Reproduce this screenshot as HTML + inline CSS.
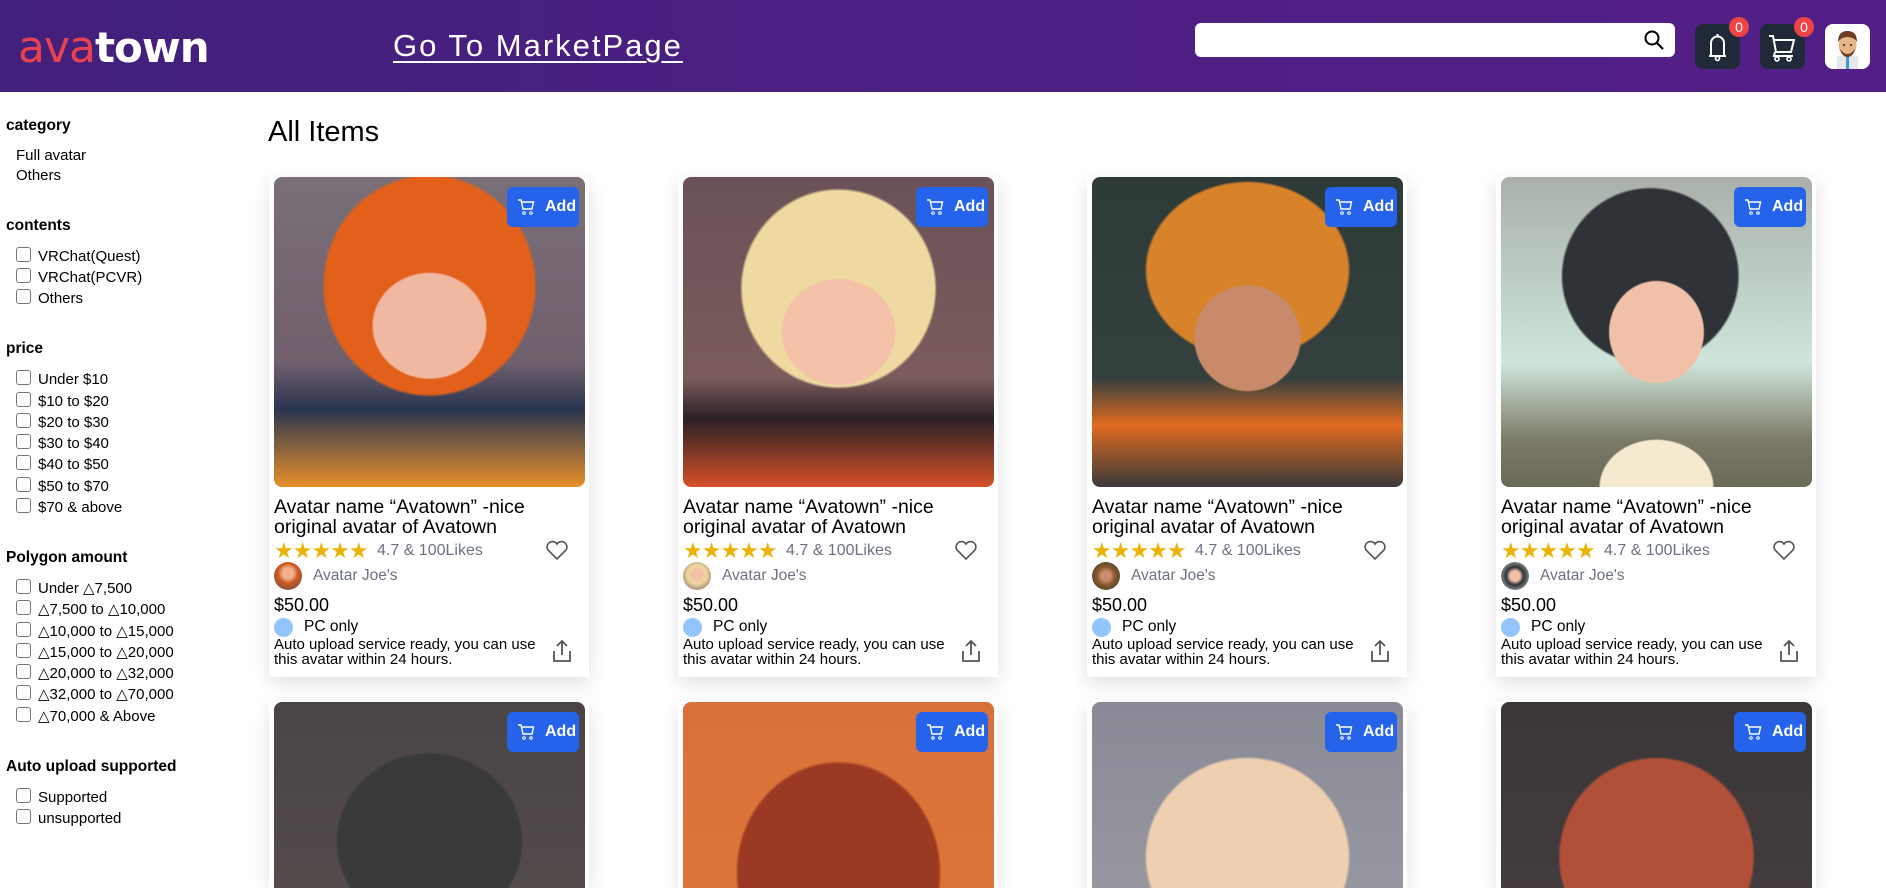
<!DOCTYPE html>
<html style="height:888px;overflow:hidden"><head><meta charset="utf-8">
<style>
*{margin:0;padding:0;box-sizing:border-box}
html,body{width:1886px;height:888px;overflow:hidden}
body{background:#fff;font-family:"Liberation Sans",sans-serif;color:#000;position:relative}
.hdr{position:absolute;left:0;top:0;width:1886px;height:92px;background:linear-gradient(90deg,#43207c,#4b1f82 50%,#531f86)}
.logo{position:absolute;left:18px;top:22px;font-size:42px;font-weight:bold;letter-spacing:-1px}
.logo .a{color:#e8414f;font-family:"DejaVu Sans",sans-serif;font-weight:normal;font-size:44px}
.logo .t{color:#fff;font-family:"DejaVu Sans",sans-serif}
.mk{position:absolute;left:393px;top:28px;color:#fff;font-size:31px;text-decoration:underline;letter-spacing:2px;text-underline-offset:5px;text-decoration-thickness:2px}
.search{position:absolute;left:1195px;top:23px;width:480px;height:34px;background:#fff;border-radius:6px}
.ib{position:absolute;top:24px;width:45px;height:45px;background:#1f2937;border-radius:8px}
.badge{position:absolute;top:-7px;right:-9px;width:20px;height:20px;border-radius:50%;background:#ef4444;color:#fff;font-size:14px;text-align:center;line-height:20px}
.av{position:absolute;left:1825px;top:24px;width:45px;height:45px;background:#fff;border-radius:8px;overflow:hidden}
.s{position:absolute;left:6px;font-size:15.5px;font-weight:bold}
.i{position:absolute;left:16px;font-size:15px;white-space:nowrap}
.c{position:absolute;left:16px;font-size:15px;white-space:nowrap}
.c:before{content:"";display:inline-block;width:13px;height:13px;border:1px solid #767676;border-radius:3px;margin-right:7px;vertical-align:-1px}
h1{position:absolute;left:268px;top:116px;font-size:29px;font-weight:normal}
.card{position:absolute;width:320px;height:500px;background:#fff;box-shadow:0 6px 18px rgba(0,0,0,.12)}
.img{position:absolute;left:5px;top:0;width:311px;height:310px;border-radius:8px;overflow:hidden}
.add{position:absolute;right:10px;top:10px;width:72px;height:40px;background:#2563eb;border-radius:6px;color:#fff;font-weight:bold;font-size:16px;line-height:40px;padding-left:38px}
.add svg{position:absolute;left:10px;top:11px}
.ti{position:absolute;left:5px;top:320px;font-size:19.5px;line-height:20px;width:310px}
.st{position:absolute;left:5px;top:361px;color:#eab308;font-size:22px;letter-spacing:-1px}
.rt{position:absolute;left:108px;top:365px;color:#6b7280;font-size:16px}
.hr{position:absolute;left:276px;top:362px}
.sl{position:absolute;left:5px;top:385px;width:28px;height:28px;border-radius:50%}
.sn{position:absolute;left:44px;top:390px;color:#6b7280;font-size:15.5px}
.pr{position:absolute;left:5px;top:418px;font-size:18px}
.dot{position:absolute;left:5px;top:441px;width:19px;height:19px;border-radius:50%;background:#93c5fd}
.pc{position:absolute;left:35px;top:441px;font-size:15.5px}
.au{position:absolute;left:5px;top:460px;font-size:15px;line-height:15px;width:280px}
.sh{position:absolute;left:283px;top:462px}
</style></head><body>
<div class="hdr">
<div class="logo"><span class="a">ava</span><span class="t">town</span></div>
<div class="mk">Go To MarketPage</div>
<div class="search"><svg style="position:absolute;right:10px;top:6px" width="22" height="22" viewBox="0 0 22 22"><circle cx="9" cy="9" r="6.5" fill="none" stroke="#000" stroke-width="2"/><path d="M14 14l6 6" stroke="#000" stroke-width="2.2"/></svg></div>
<div class="ib" style="left:1695px"><svg width="45" height="45" viewBox="0 0 45 45"><path d="M14 32h17M16 32V19a6.5 6.5 0 0 1 13 0v13" fill="none" stroke="#fff" stroke-width="2"/><path d="M22.5 10v2" stroke="#fff" stroke-width="2"/><circle cx="22.5" cy="34.5" r="2" fill="none" stroke="#fff" stroke-width="1.6"/></svg><div class="badge">0</div></div>
<div class="ib" style="left:1760px"><svg width="45" height="45" viewBox="0 0 45 45"><path d="M9 12h4l3 16h15l3-12H14" fill="none" stroke="#fff" stroke-width="2"/><path d="M15 28l-1 4h19" fill="none" stroke="#fff" stroke-width="2"/><circle cx="17" cy="35" r="2" fill="none" stroke="#fff" stroke-width="1.6"/><circle cx="29" cy="35" r="2" fill="none" stroke="#fff" stroke-width="1.6"/></svg><div class="badge">0</div></div>
<div class="av"><svg width="45" height="45" viewBox="0 0 45 45"><rect x="12" y="32" width="21" height="13" fill="#e5e7eb"/><rect x="21" y="33" width="3" height="12" fill="#3b9ad9"/><ellipse cx="22.5" cy="21" rx="9" ry="11" fill="#e8b48a"/><path d="M13 18q0-11 9.5-11t9.5 11q-3-5-9.5-5t-9.5 5z" fill="#6b3f22"/><path d="M15 25q7.5 10 15 0q-2 8-7.5 8t-7.5-8z" fill="#6b3f22"/><circle cx="19" cy="21" r="1" fill="#222"/><circle cx="26" cy="21" r="1" fill="#222"/></svg></div>
</div>

<div class="s" style="top:117px">category</div>
<div class="i" style="top:147px">Full avatar</div>
<div class="i" style="top:167px">Others</div>
<div class="s" style="top:217px">contents</div>
<div class="c" style="top:247px">VRChat(Quest)</div>
<div class="c" style="top:268px">VRChat(PCVR)</div>
<div class="c" style="top:289px">Others</div>
<div class="s" style="top:340px">price</div>
<div class="c" style="top:370px">Under $10</div>
<div class="c" style="top:392px">$10 to $20</div>
<div class="c" style="top:413px">$20 to $30</div>
<div class="c" style="top:434px">$30 to $40</div>
<div class="c" style="top:455px">$40 to $50</div>
<div class="c" style="top:477px">$50 to $70</div>
<div class="c" style="top:498px">$70 &amp; above</div>
<div class="s" style="top:549px">Polygon amount</div>
<div class="c" style="top:579px">Under △7,500</div>
<div class="c" style="top:600px">△7,500 to △10,000</div>
<div class="c" style="top:622px">△10,000 to △15,000</div>
<div class="c" style="top:643px">△15,000 to △20,000</div>
<div class="c" style="top:664px">△20,000 to △32,000</div>
<div class="c" style="top:685px">△32,000 to △70,000</div>
<div class="c" style="top:707px">△70,000 &amp; Above</div>
<div class="s" style="top:758px">Auto upload supported</div>
<div class="c" style="top:788px">Supported</div>
<div class="c" style="top:809px">unsupported</div>

<h1>All Items</h1>

<div class="card" style="left:269px;top:177px"><div class="img" style="background:radial-gradient(ellipse 30% 28% at 50% 48%,#f0b8a0 60%,transparent 62%),radial-gradient(ellipse 48% 50% at 50% 35%,#e2601a 70%,transparent 72%),linear-gradient(180deg,#7a6f78 0%,#6f5f6c 60%,#2a3550 75%,#e8902a 100%)"></div><div class="add"><svg width="18" height="18" viewBox="0 0 18 18"><path d="M1 2h3l2 9h9l1.5-7H5" fill="none" stroke="#fff" stroke-width="1.4"/><circle cx="7" cy="15" r="1.3" fill="none" stroke="#fff"/><circle cx="14" cy="15" r="1.3" fill="none" stroke="#fff"/></svg>Add</div>
<div class="ti">Avatar name “Avatown” -nice original avatar of Avatown</div><div class="st">★★★★★</div><div class="rt">4.7 &amp; 100Likes</div><svg class="hr" width="24" height="22" viewBox="0 0 24 22"><path d="M12 20L3 11a5 5 0 0 1 9-6 5 5 0 0 1 9 6z" fill="none" stroke="#555" stroke-width="1.6"/></svg><div class="sl" style="background:radial-gradient(circle at 50% 40%,#f0b090 25%,#d05a20 45%,#5a4a5a)"></div><div class="sn">Avatar Joe's</div><div class="pr">$50.00</div><div class="dot"></div><div class="pc">PC only</div><div class="au">Auto upload service ready, you can use this avatar within 24 hours.</div><svg class="sh" width="20" height="24" viewBox="0 0 20 24"><path d="M10 2v14M5 7l5-5 5 5M2 12v10h16V12" fill="none" stroke="#555" stroke-width="1.8"/></svg></div>

<div class="card" style="left:678px;top:177px"><div class="img" style="background:radial-gradient(ellipse 30% 28% at 50% 50%,#f3c2a8 60%,transparent 62%),radial-gradient(ellipse 44% 45% at 50% 36%,#eed9a0 70%,transparent 72%),linear-gradient(180deg,#6a5258 0%,#7a5c5c 65%,#2a2024 78%,#d8502a 100%)"></div><div class="add"><svg width="18" height="18" viewBox="0 0 18 18"><path d="M1 2h3l2 9h9l1.5-7H5" fill="none" stroke="#fff" stroke-width="1.4"/><circle cx="7" cy="15" r="1.3" fill="none" stroke="#fff"/><circle cx="14" cy="15" r="1.3" fill="none" stroke="#fff"/></svg>Add</div>
<div class="ti">Avatar name “Avatown” -nice original avatar of Avatown</div><div class="st">★★★★★</div><div class="rt">4.7 &amp; 100Likes</div><svg class="hr" width="24" height="22" viewBox="0 0 24 22"><path d="M12 20L3 11a5 5 0 0 1 9-6 5 5 0 0 1 9 6z" fill="none" stroke="#555" stroke-width="1.6"/></svg><div class="sl" style="background:radial-gradient(circle at 50% 45%,#f3c2a8 25%,#eed9a0 45%,#6a5258)"></div><div class="sn">Avatar Joe's</div><div class="pr">$50.00</div><div class="dot"></div><div class="pc">PC only</div><div class="au">Auto upload service ready, you can use this avatar within 24 hours.</div><svg class="sh" width="20" height="24" viewBox="0 0 20 24"><path d="M10 2v14M5 7l5-5 5 5M2 12v10h16V12" fill="none" stroke="#555" stroke-width="1.8"/></svg></div>

<div class="card" style="left:1087px;top:177px"><div class="img" style="background:radial-gradient(ellipse 28% 28% at 50% 52%,#c88a6a 60%,transparent 62%),radial-gradient(ellipse 46% 40% at 50% 30%,#d8822a 70%,transparent 72%),linear-gradient(180deg,#2e3a38 0%,#34403e 65%,#e06a20 80%,#3a3a3a 100%)"></div><div class="add"><svg width="18" height="18" viewBox="0 0 18 18"><path d="M1 2h3l2 9h9l1.5-7H5" fill="none" stroke="#fff" stroke-width="1.4"/><circle cx="7" cy="15" r="1.3" fill="none" stroke="#fff"/><circle cx="14" cy="15" r="1.3" fill="none" stroke="#fff"/></svg>Add</div>
<div class="ti">Avatar name “Avatown” -nice original avatar of Avatown</div><div class="st">★★★★★</div><div class="rt">4.7 &amp; 100Likes</div><svg class="hr" width="24" height="22" viewBox="0 0 24 22"><path d="M12 20L3 11a5 5 0 0 1 9-6 5 5 0 0 1 9 6z" fill="none" stroke="#555" stroke-width="1.6"/></svg><div class="sl" style="background:radial-gradient(circle at 50% 50%,#c88a6a 25%,#8a5a2a 45%,#2e3a38)"></div><div class="sn">Avatar Joe's</div><div class="pr">$50.00</div><div class="dot"></div><div class="pc">PC only</div><div class="au">Auto upload service ready, you can use this avatar within 24 hours.</div><svg class="sh" width="20" height="24" viewBox="0 0 20 24"><path d="M10 2v14M5 7l5-5 5 5M2 12v10h16V12" fill="none" stroke="#555" stroke-width="1.8"/></svg></div>

<div class="card" style="left:1496px;top:177px"><div class="img" style="background:radial-gradient(ellipse 25% 27% at 50% 50%,#f0c0a8 60%,transparent 62%),radial-gradient(ellipse 40% 40% at 48% 32%,#2f3338 70%,transparent 72%),radial-gradient(ellipse 30% 25% at 50% 100%,#f3ead0 60%,transparent 62%),linear-gradient(180deg,#a9b0aa 0%,#cfe6da 60%,#7a7a66 85%,#6a6a58 100%)"></div><div class="add"><svg width="18" height="18" viewBox="0 0 18 18"><path d="M1 2h3l2 9h9l1.5-7H5" fill="none" stroke="#fff" stroke-width="1.4"/><circle cx="7" cy="15" r="1.3" fill="none" stroke="#fff"/><circle cx="14" cy="15" r="1.3" fill="none" stroke="#fff"/></svg>Add</div>
<div class="ti">Avatar name “Avatown” -nice original avatar of Avatown</div><div class="st">★★★★★</div><div class="rt">4.7 &amp; 100Likes</div><svg class="hr" width="24" height="22" viewBox="0 0 24 22"><path d="M12 20L3 11a5 5 0 0 1 9-6 5 5 0 0 1 9 6z" fill="none" stroke="#555" stroke-width="1.6"/></svg><div class="sl" style="background:radial-gradient(circle at 50% 50%,#f0c0a8 25%,#2f3338 45%,#cfe6da)"></div><div class="sn">Avatar Joe's</div><div class="pr">$50.00</div><div class="dot"></div><div class="pc">PC only</div><div class="au">Auto upload service ready, you can use this avatar within 24 hours.</div><svg class="sh" width="20" height="24" viewBox="0 0 20 24"><path d="M10 2v14M5 7l5-5 5 5M2 12v10h16V12" fill="none" stroke="#555" stroke-width="1.8"/></svg></div>

<div class="card" style="left:269px;top:702px;height:186px"><div class="img" style="background:radial-gradient(ellipse 26% 28% at 50% 82%,#d8a888 60%,transparent 62%),radial-gradient(ellipse 42% 40% at 50% 45%,#3a3a3c 70%,transparent 72%),linear-gradient(180deg,#4a4444,#5a5050)"></div><div class="add"><svg width="18" height="18" viewBox="0 0 18 18"><path d="M1 2h3l2 9h9l1.5-7H5" fill="none" stroke="#fff" stroke-width="1.4"/><circle cx="7" cy="15" r="1.3" fill="none" stroke="#fff"/><circle cx="14" cy="15" r="1.3" fill="none" stroke="#fff"/></svg>Add</div></div>
<div class="card" style="left:678px;top:702px;height:186px"><div class="img" style="background:radial-gradient(ellipse 26% 28% at 50% 85%,#e8a888 60%,transparent 62%),radial-gradient(ellipse 46% 50% at 50% 55%,#9a3a22 70%,transparent 72%),linear-gradient(180deg,#d8703a,#e07838)"></div><div class="add"><svg width="18" height="18" viewBox="0 0 18 18"><path d="M1 2h3l2 9h9l1.5-7H5" fill="none" stroke="#fff" stroke-width="1.4"/><circle cx="7" cy="15" r="1.3" fill="none" stroke="#fff"/><circle cx="14" cy="15" r="1.3" fill="none" stroke="#fff"/></svg>Add</div></div>
<div class="card" style="left:1087px;top:702px;height:186px"><div class="img" style="background:radial-gradient(ellipse 26% 28% at 50% 85%,#f0c0a8 60%,transparent 62%),radial-gradient(ellipse 46% 45% at 50% 50%,#eed0b0 70%,transparent 72%),linear-gradient(180deg,#8a8a96,#a0a0a8)"></div><div class="add"><svg width="18" height="18" viewBox="0 0 18 18"><path d="M1 2h3l2 9h9l1.5-7H5" fill="none" stroke="#fff" stroke-width="1.4"/><circle cx="7" cy="15" r="1.3" fill="none" stroke="#fff"/><circle cx="14" cy="15" r="1.3" fill="none" stroke="#fff"/></svg>Add</div></div>
<div class="card" style="left:1496px;top:702px;height:186px"><div class="img" style="background:radial-gradient(ellipse 26% 28% at 50% 85%,#f0b898 60%,transparent 62%),radial-gradient(ellipse 44% 45% at 50% 50%,#b05038 70%,transparent 72%),linear-gradient(180deg,#3a3638,#4a4040)"></div><div class="add"><svg width="18" height="18" viewBox="0 0 18 18"><path d="M1 2h3l2 9h9l1.5-7H5" fill="none" stroke="#fff" stroke-width="1.4"/><circle cx="7" cy="15" r="1.3" fill="none" stroke="#fff"/><circle cx="14" cy="15" r="1.3" fill="none" stroke="#fff"/></svg>Add</div></div>
</body></html>
